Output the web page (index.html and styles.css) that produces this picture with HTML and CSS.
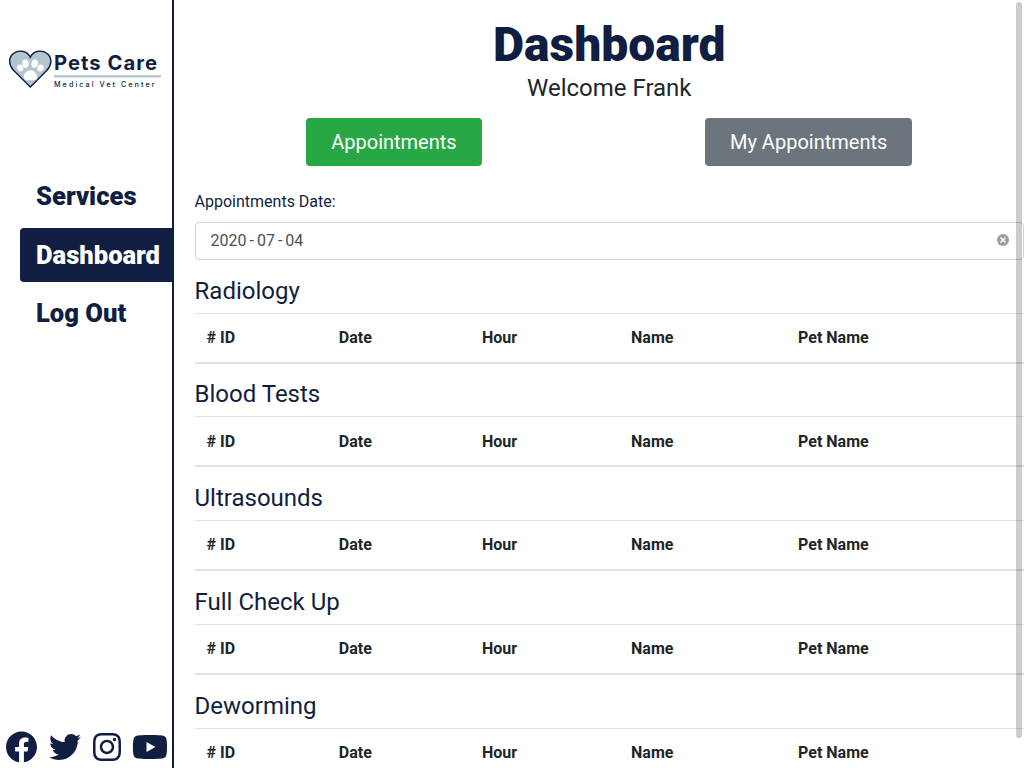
FILE: index.html
```html
<!DOCTYPE html>
<html lang="en">
<head>
<meta charset="utf-8">
<title>Pets Care</title>
<link rel="stylesheet" href="styles.css">
</head>
<body>
<div class="app">
  <aside class="sidebar">
    <svg class="logo" viewBox="0 0 172 60" role="img" aria-label="Pets Care Medical Vet Center">
      <path class="heart" d="M30.300 47 L13.500 30.200 C8.500 24.800 8.500 18.100 12.500 14.300 C17.500 9.500 27 10 30.300 17.300 C33.500 10 43 9.500 48 14.300 C52 18.100 52 24.800 47 30.200 Z"/>
      <g class="paw">
        <ellipse cx="20.200" cy="28" rx="3" ry="3.500" transform="rotate(-25 20.200 28)"/>
        <ellipse cx="25.500" cy="23.600" rx="3.200" ry="4.100" transform="rotate(-8 25.500 23.600)"/>
        <ellipse cx="34.700" cy="23.600" rx="3.200" ry="4.100" transform="rotate(8 34.700 23.600)"/>
        <ellipse cx="40.500" cy="28" rx="3" ry="3.500" transform="rotate(25 40.500 28)"/>
        <path d="M30.500 30.300 C34 30.300 37.200 33.300 37.200 36.700 C37.200 41 33.500 40.200 30.500 40.200 C27.500 40.200 23.800 41 23.800 36.700 C23.800 33.300 27 30.300 30.500 30.300 Z"/>
      </g>
      <text class="brand" x="54" y="30.200" textLength="103">Pets Care</text>
      <rect class="rule" x="54" y="35.200" width="107" height="2.300"/>
      <text class="tagline" x="54" y="46.500" textLength="100.500">Medical Vet Center</text>
    </svg>
    <nav class="menu">
      <a class="menu-link">Services</a>
      <a class="menu-link active">Dashboard</a>
      <a class="menu-link">Log Out</a>
    </nav>
    <div class="social">
      <svg class="icon" viewBox="0 0 496 512"><path d="M496 256C496 119 385 8 248 8S0 119 0 256c0 123.780 90.690 226.380 209.250 245V327.690h-63V256h63v-54.640c0-62.150 37-96.480 93.670-96.480 27.140 0 55.520 4.840 55.520 4.840v61h-31.280c-30.800 0-40.410 19.120-40.410 38.730V256h68.780l-11 71.690h-57.780V501C405.310 482.380 496 379.780 496 256z"/></svg>
      <svg class="icon" viewBox="0 0 512 512"><path d="M459.370 151.716c.325 4.548.325 9.097.325 13.645 0 138.720-105.583 298.558-298.558 298.558-59.452 0-114.680-17.219-161.137-47.106 8.447.974 16.568 1.299 25.340 1.299 49.055 0 94.213-16.568 130.274-44.832-46.132-.975-84.792-31.188-98.112-72.772 6.498.974 12.995 1.624 19.818 1.624 9.421 0 18.843-1.300 27.614-3.573-48.081-9.747-84.143-51.980-84.143-102.985v-1.299c13.969 7.797 30.214 12.670 47.431 13.319-28.264-18.843-46.781-51.005-46.781-87.391 0-19.492 5.197-37.360 14.294-52.954 51.655 63.675 129.300 105.258 216.365 109.807-1.624-7.797-2.599-15.918-2.599-24.040 0-57.828 46.782-104.934 104.934-104.934 30.213 0 57.502 12.670 76.670 33.137 23.715-4.548 46.456-13.320 66.599-25.340-7.798 24.366-24.366 44.833-46.132 57.827 21.117-2.273 41.584-8.122 60.426-16.243-14.292 20.791-32.161 39.308-52.628 54.253z"/></svg>
      <svg class="icon" viewBox="0 0 448 512"><path d="M224.100 141c-63.600 0-114.900 51.300-114.900 114.900s51.300 114.900 114.900 114.900S339 319.500 339 255.900 287.700 141 224.100 141zm0 189.600c-41.100 0-74.700-33.500-74.700-74.700s33.500-74.700 74.700-74.700 74.700 33.500 74.700 74.700-33.600 74.700-74.700 74.700zm146.400-194.300c0 14.900-12 26.800-26.800 26.800-14.900 0-26.800-12-26.800-26.800s12-26.800 26.800-26.800 26.800 12 26.800 26.800zm76.100 27.200c-1.700-35.900-9.900-67.700-36.200-93.900-26.200-26.200-58-34.400-93.900-36.200-37-2.100-147.900-2.100-184.900 0-35.800 1.700-67.600 9.900-93.900 36.100s-34.400 58-36.200 93.900c-2.100 37-2.100 147.900 0 184.900 1.700 35.900 9.900 67.700 36.200 93.900s58 34.400 93.900 36.200c37 2.100 147.900 2.100 184.900 0 35.900-1.700 67.700-9.900 93.900-36.200 26.200-26.200 34.400-58 36.200-93.900 2.100-37 2.100-147.800 0-184.800zM398.800 388c-7.800 19.600-22.900 34.700-42.600 42.600-29.500 11.700-99.500 9-132.100 9s-102.700 2.600-132.100-9c-19.600-7.800-34.700-22.900-42.600-42.600-11.700-29.500-9-99.500-9-132.100s-2.600-102.700 9-132.100c7.800-19.600 22.900-34.700 42.600-42.600 29.500-11.700 99.500-9 132.100-9s102.700-2.600 132.100 9c19.600 7.800 34.700 22.900 42.600 42.600 11.700 29.500 9 99.500 9 132.100s2.700 102.700-9 132.100z"/></svg>
      <svg class="icon" viewBox="0 0 576 512"><path d="M549.655 124.083c-6.281-23.650-24.787-42.276-48.284-48.597C458.781 64 288 64 288 64S117.220 64 74.629 75.486c-23.497 6.322-42.003 24.947-48.284 48.597-11.412 42.867-11.412 132.305-11.412 132.305s0 89.438 11.412 132.305c6.281 23.650 24.787 41.500 48.284 47.821C117.220 448 288 448 288 448s170.780 0 213.371-11.486c23.497-6.321 42.003-24.171 48.284-47.821 11.412-42.867 11.412-132.305 11.412-132.305s0-89.438-11.412-132.305zm-317.510 213.508V175.185l142.739 81.205-142.739 81.201z"/></svg>
    </div>
  </aside>
  <main class="content">
    <h1 class="title">Dashboard</h1>
    <h4 class="welcome">Welcome Frank</h4>
    <div class="actions">
      <button class="btn btn-success">Appointments</button>
      <button class="btn btn-secondary">My Appointments</button>
    </div>
    <div class="field">
      <label class="label">Appointments Date:</label>
      <div class="date-input">
        <span class="date"><span>2020</span><span>-</span><span>07</span><span>-</span><span>04</span></span>
        <svg class="clear" viewBox="0 0 12 12"><circle cx="6" cy="6" r="6"/><path d="M3.500 3.500l5 5M8.500 3.500l-5 5"/></svg>
      </div>
    </div>
    <section>
      <h4 class="heading">Radiology</h4>
      <table class="table"><thead><tr><th class="c-id"># ID</th><th class="c-date">Date</th><th class="c-hour">Hour</th><th class="c-name">Name</th><th>Pet Name</th></tr></thead></table>
    </section>
    <section>
      <h4 class="heading">Blood Tests</h4>
      <table class="table"><thead><tr><th class="c-id"># ID</th><th class="c-date">Date</th><th class="c-hour">Hour</th><th class="c-name">Name</th><th>Pet Name</th></tr></thead></table>
    </section>
    <section>
      <h4 class="heading">Ultrasounds</h4>
      <table class="table"><thead><tr><th class="c-id"># ID</th><th class="c-date">Date</th><th class="c-hour">Hour</th><th class="c-name">Name</th><th>Pet Name</th></tr></thead></table>
    </section>
    <section>
      <h4 class="heading">Full Check Up</h4>
      <table class="table"><thead><tr><th class="c-id"># ID</th><th class="c-date">Date</th><th class="c-hour">Hour</th><th class="c-name">Name</th><th>Pet Name</th></tr></thead></table>
    </section>
    <section>
      <h4 class="heading">Deworming</h4>
      <table class="table"><thead><tr><th class="c-id"># ID</th><th class="c-date">Date</th><th class="c-hour">Hour</th><th class="c-name">Name</th><th>Pet Name</th></tr></thead></table>
    </section>
  </main>
  <div class="scroll-thumb"></div>
</div>
</body>
</html>
```
FILE: styles.css
```css
* { box-sizing: border-box; }
body {
  margin: 0;
  background: #fff;
  color: #212529;
  font: 400 16px/1.5 Roboto, sans-serif;
}
h1, h4 { margin: 0 0 8px; line-height: 1.2; }
.app {
  position: relative;
  display: flex;
  height: 100vh;
  overflow: hidden;
}
.sidebar {
  flex: none;
  width: 17%;
  display: flex;
  flex-direction: column;
  border-right: 2px solid #101e41;
}
.logo { display: block; width: 172px; height: 60px; margin-top: 40px; }
.heart { fill: #b4c5cd; stroke: #101e41; stroke-width: 1.4; }
.paw { fill: #fff; }
.brand { font: 650 20.200px Inter, sans-serif; fill: #101e41; }
.rule { fill: #b4c5cd; }
.tagline { font: 500 7.200px Inter, sans-serif; fill: #101e41; }
.menu {
  display: flex;
  flex-direction: column;
  gap: 4.500px;
  margin-top: 69px;
  padding-left: 20px;
}
.menu-link {
  padding: 8px 0 8px 16px;
  border-radius: 4px 0 0 4px;
  color: #101e41;
  font-size: 25.600px;
  font-weight: 900;
  line-height: 38px;
}
.menu-link.active { background: #101e41; color: #fff; }
.social {
  display: grid;
  grid-template-columns: repeat(4, 42.700px);
  justify-items: center;
  margin-top: auto;
  padding: 0 0 5px .600px;
}
.icon { display: block; height: 32px; fill: #101e41; }
.content {
  flex: none;
  width: 81%;
  margin-left: 2%;
  padding-top: 16px;
  color: #101e41;
}
.title {
  margin: 0;
  text-align: center;
  font-size: 48px;
  font-weight: 900;
}
.welcome {
  color: #212529;
  text-align: center;
  font-size: 24px;
  font-weight: 400;
}
.actions {
  display: flex;
  justify-content: space-around;
  margin: 16px 0 24px;
}
.btn {
  padding: 8px 25px;
  height: 48px;
  border: 0;
  border-radius: 4px;
  color: #fff;
  font: 400 20px/1.5 Roboto, sans-serif;
}
.btn-success { background: #28a745; }
.btn-secondary { background: #6c757d; }
.field { margin-bottom: 16.200px; }
.label { display: block; margin-bottom: 8px; }
.date-input {
  display: flex;
  align-items: center;
  justify-content: space-between;
  height: 38px;
  padding: 0 14px;
  border: 1px solid #ced4da;
  border-radius: 4px;
  color: #495057;
}
.date { display: flex; gap: 3px; padding-left: 1px; }
.clear { width: 12px; height: 12px; margin-bottom: 2px; fill: #9e9e9e; }
.clear path { stroke: #fff; stroke-width: 1.500; }
.heading { margin-bottom: 7.200px; font-size: 24px; font-weight: 400; }
.table {
  width: 100%;
  margin-bottom: 16.800px;
  border-collapse: collapse;
  table-layout: fixed;
  color: #212529;
}
.table th {
  padding: 12.400px 12px 11.600px;
  border-top: 1px solid #dee2e6;
  border-bottom: 2px solid #dee2e6;
  text-align: left;
  font-weight: 700;
}
.c-id { width: 132.300px; }
.c-date { width: 143.200px; }
.c-hour { width: 149px; }
.c-name { width: 167px; }
.scroll-thumb {
  position: absolute;
  top: 2px;
  right: 2px;
  width: 6px;
  height: 736px;
  border-radius: 3px;
  background: rgba(0, 0, 0, .2);
}
```
